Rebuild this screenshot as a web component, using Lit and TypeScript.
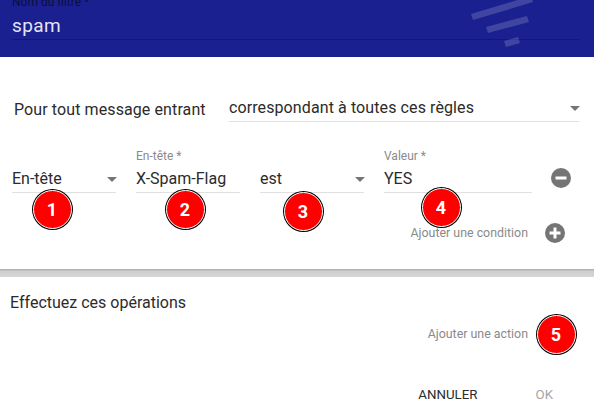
import { LitElement, html, css, svg } from "lit";
import { customElement } from "lit/decorators.js";

@customElement("app-root")
export class AppRoot extends LitElement {
  static styles = css`
    :host { display: block; width: 594px; height: 419px; overflow: hidden; position: relative; background: #fff;
      font-family: Roboto, "Noto Sans", sans-serif; color: #2b2b2b; font-size: 16px; }
    * { box-sizing: border-box; }
    header { height: 57px; background: #1a208f; padding: 0 15px 0 12px; position: relative; overflow: hidden; }
    .title-label { height: 10px; font-size: 12px; line-height: 10px; color: rgba(0,0,0,.6); margin-top: -3px; margin-bottom: 9px; }
    .title-input { height: 24px; border-bottom: 1px solid rgba(0,0,0,.25); color: #e3e4f4; font-size: 19px; line-height: 20px; letter-spacing: .4px; }
    .funnel { position: absolute; left: 465px; top: 0; width: 75px; height: 50px; }
    .rules { height: 212px; position: relative; padding: 41px 15px 0 14px; }
    .match { display: flex; align-items: flex-end; gap: 23px; height: 24px; letter-spacing: .1px; }
    .match-label { width: 192px; line-height: 20px; white-space: nowrap; margin-bottom: 2px; }
    .select, .input { border-bottom: 1px solid #e0e0e0; display: flex; align-items: flex-start; justify-content: space-between; line-height: 20px; white-space: nowrap; }
    .match .select { flex: 1; height: 24px; }
    .caret { width: 0; height: 0; border: 5px solid transparent; border-top-color: #757575; border-bottom: 0; margin: 8px -1px 0 0; flex: none; }
    .fields { display: grid; grid-template-columns: 104px 104px 104px 148px 20px; column-gap: 20px; margin: 27px 0 0 -2px; align-items: end; }
    .field .lab { font-size: 12px; line-height: 14px; color: #8a8a8a; height: 14px; margin-bottom: 5px; }
    .fields .select, .fields .input { height: 25px; padding-top: 1px; }
    .round { width: 20px; height: 20px; border-radius: 50%; background: #757575; display: block; flex: none; }
    .minus { margin: 0 0 5px -1px; }
    .add { display: flex; justify-content: flex-end; align-items: center; gap: 17px; color: #8a8a8a; font-size: 12.4px; line-height: 20px; white-space: nowrap; }
    .add.cond { margin: 30px 14px 0 0; }
    .band { height: 8px; background: linear-gradient(#a9a9a9 0, #cfcfcf 30%, #d6d6d6 100%); }
    .actions { padding: 16px 10px 0; height: 108px; }
    .actions h2 { margin: 0; font: inherit; line-height: 20px; }
    .add.act { margin: 11px 19px 0 0; }
    footer { display: flex; justify-content: flex-end; gap: 58px; padding: 0 41px 0 0; font-size: 13.3px; line-height: 20px; }
    footer .off { color: #a6a6a6; }
    .badge { position: absolute; width: 39px; height: 39px; border-radius: 50%; background: #f00; color: #fff; font-weight: 700; font-size: 18px;
      display: flex; align-items: center; justify-content: center; border: 1px solid #fff; box-shadow: 0 0 0 1px #000; }
  `;

  private badge(n: number, x: number, y: number) {
    return html`<div class="badge" style="left:${x - 19.5}px;top:${y - 19.5}px">${n}</div>`;
  }

  private icon(kind: "plus" | "minus", cls = "") {
    return html`<svg class="round ${cls}" viewBox="0 0 20 20"><rect x="4.5" y="8.5" width="11" height="3" fill="#fff"></rect>${
      kind === "plus" ? svg`<rect x="8.5" y="4.5" width="3" height="11" fill="#fff"></rect>` : ""
    }</svg>`;
  }

  render() {
    return html`
      <header>
        <div class="title-label">Nom du filtre *</div>
        <div class="title-input">spam</div>
        <svg class="funnel" viewBox="0 0 75 50">
          <g fill="#fff" fill-opacity=".17">
            <polygon points="6,14 66,-4 68,2 8,20"></polygon>
            <polygon points="21,27 62,16 64,22 23,33"></polygon>
            <polygon points="39,41 53,37 55,43 41,47"></polygon>
          </g>
        </svg>
      </header>
      <section class="rules">
        <div class="match">
          <div class="match-label">Pour tout message entrant</div>
          <div class="select">correspondant à toutes ces règles<span class="caret"></span></div>
        </div>
        <div class="fields">
          <div class="field"><div class="select">En-tête<span class="caret"></span></div></div>
          <div class="field"><div class="lab">En-tête *</div><div class="input">X-Spam-Flag</div></div>
          <div class="field"><div class="select">est<span class="caret"></span></div></div>
          <div class="field"><div class="lab">Valeur *</div><div class="input">YES</div></div>
          ${this.icon("minus", "minus")}
        </div>
        <div class="add cond"><span>Ajouter une condition</span>${this.icon("plus")}</div>
      </section>
      <div class="band"></div>
      <section class="actions">
        <h2>Effectuez ces opérations</h2>
        <div class="add act"><span>Ajouter une action</span>${this.icon("plus")}</div>
      </section>
      <footer><span>ANNULER</span><span class="off">OK</span></footer>
      ${this.badge(1, 52, 209)}${this.badge(2, 185, 209)}${this.badge(3, 303, 211)}${this.badge(4, 441, 207)}${this.badge(5, 556, 334)}
    `;
  }
}
